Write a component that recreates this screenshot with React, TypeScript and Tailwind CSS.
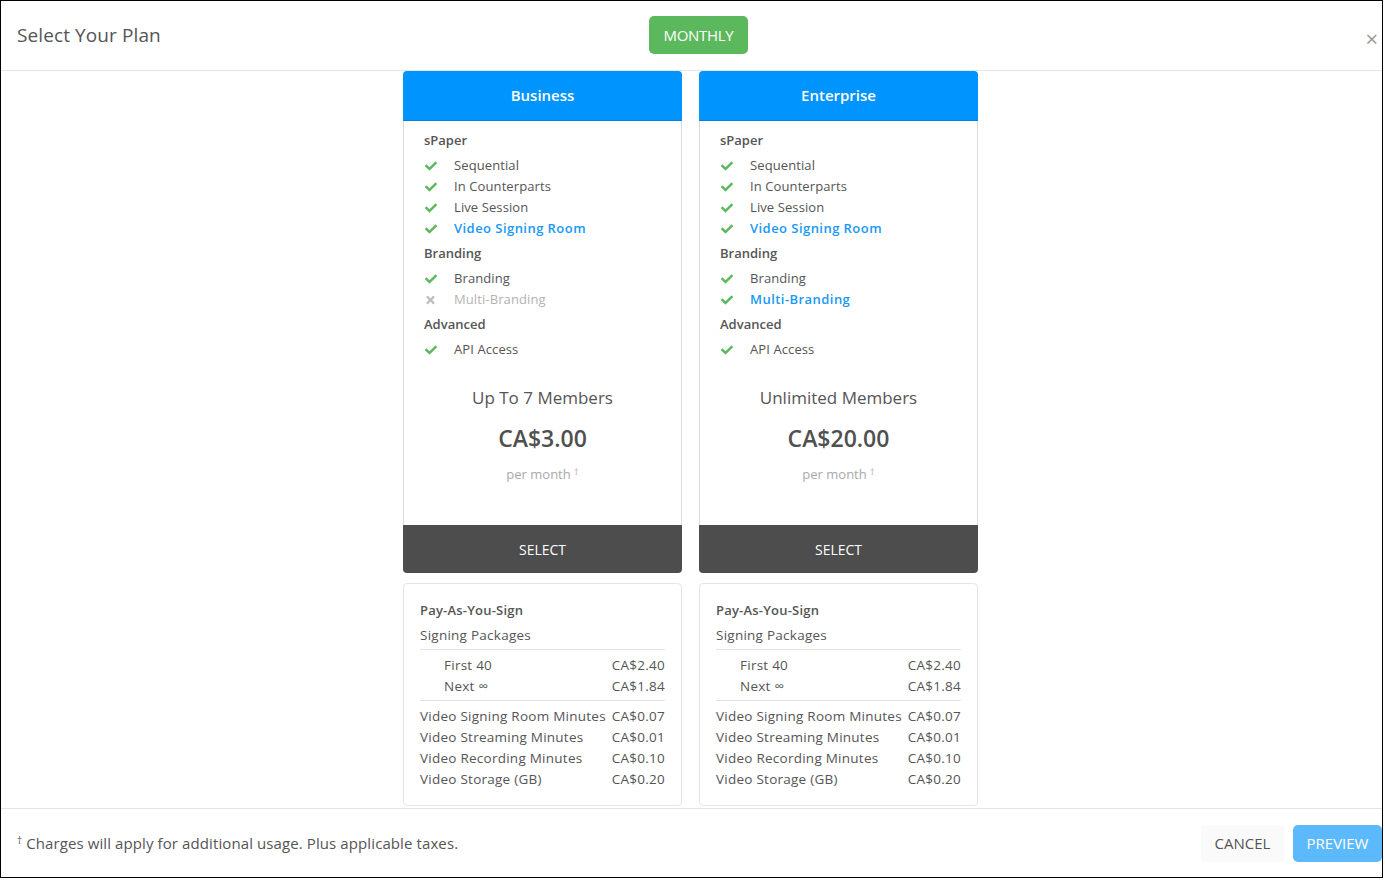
import { FaCheck, FaTimes } from "react-icons/fa";

type Feature = { label: string; on: boolean; highlight?: boolean };
type Group = { title: string; items: Feature[] };

interface Plan {
    name: string;
    groups: Group[];
    members: string;
    price: string;
}

const plans: Plan[] = [
    {
        name: "Business",
        members: "Up To 7 Members",
        price: "CA$3.00",
        groups: [
            {
                title: "sPaper",
                items: [
                    { label: "Sequential", on: true },
                    { label: "In Counterparts", on: true },
                    { label: "Live Session", on: true },
                    { label: "Video Signing Room", on: true, highlight: true },
                ],
            },
            {
                title: "Branding",
                items: [
                    { label: "Branding", on: true },
                    { label: "Multi-Branding", on: false },
                ],
            },
            { title: "Advanced", items: [{ label: "API Access", on: true }] },
        ],
    },
    {
        name: "Enterprise",
        members: "Unlimited Members",
        price: "CA$20.00",
        groups: [
            {
                title: "sPaper",
                items: [
                    { label: "Sequential", on: true },
                    { label: "In Counterparts", on: true },
                    { label: "Live Session", on: true },
                    { label: "Video Signing Room", on: true, highlight: true },
                ],
            },
            {
                title: "Branding",
                items: [
                    { label: "Branding", on: true },
                    { label: "Multi-Branding", on: true, highlight: true },
                ],
            },
            { title: "Advanced", items: [{ label: "API Access", on: true }] },
        ],
    },
];

const usage = [
    ["Video Signing Room Minutes", "CA$0.07"],
    ["Video Streaming Minutes", "CA$0.01"],
    ["Video Recording Minutes", "CA$0.10"],
    ["Video Storage (GB)", "CA$0.20"],
];

function PlanCard({ plan }: { plan: Plan }) {
    return (
        <div className="w-[279px] flex flex-col">
            {/* header */}
            <div className="h-[50px] bg-[#0094fe] rounded-t-[4px] border-b border-[#0583dc] flex items-center justify-center text-white text-[15px] font-semibold">
                {plan.name}
            </div>

            {/* features */}
            <div className="h-[404px] border-x border-[#dcdcdc] pt-[9px] px-[20px] text-[13px] text-[#555]">
                {plan.groups.map((g, gi) => (
                    <div key={g.title} className={gi > 0 ? "mt-[4px]" : ""}>
                        <div className="leading-[21px] font-semibold mb-[4px]">{g.title}</div>
                        {g.items.map((f) => (
                            <div key={f.label} className="flex items-center leading-[21px]">
                                <span className="w-[30px] flex items-center">
                                    {f.on ? (
                                        <FaCheck className="text-[#5cb85c] w-[14px] h-[12px]" />
                                    ) : (
                                        <FaTimes className="text-[#bdbdbd] w-[11px] h-[12px] ml-[1px]" />
                                    )}
                                </span>
                                <span
                                    className={
                                        f.highlight
                                            ? "text-[#1899f5] font-semibold tracking-[0.45px]"
                                            : f.on
                                            ? "tracking-[0.1px]"
                                            : "text-[#b3b3b3] tracking-[0.1px]"
                                    }
                                >
                                    {f.label}
                                </span>
                            </div>
                        ))}
                    </div>
                ))}
                <div className="text-center mt-[26px] text-[17px] leading-[24px] text-[#555]">{plan.members}</div>
                <div className="text-center mt-[12px] text-[23px] leading-[32px] font-semibold text-[#505050]">{plan.price}</div>
                <div className="text-center mt-[10px] text-[13px] leading-[20px] text-[#aaa]">
                    per month <sup className="text-[9px]">†</sup>
                </div>
            </div>

            <button className="h-[48px] bg-[#4d4d4d] rounded-b-[4px] text-white text-[14px]">SELECT</button>

            {/* pay as you sign */}
            <div className="mt-[10px] border border-[#e6e6e6] rounded-[4px] pt-[16px] pb-[15px] px-[16px] text-[13.5px] text-[#555] tracking-[0.25px]">
                <div className="leading-[21px] font-semibold mb-[4px] text-[13px] tracking-[0.2px]">Pay-As-You-Sign</div>
                <div className="leading-[21px] pb-[3px] border-b border-[#e3e3e3]">Signing Packages</div>
                <div className="pt-[5px] pb-[3px] border-b border-[#e3e3e3]">
                    <div className="flex justify-between leading-[21px] pl-[24px]">
                        <span>First 40</span>
                        <span>CA$2.40</span>
                    </div>
                    <div className="flex justify-between leading-[21px] pl-[24px]">
                        <span>Next ∞</span>
                        <span>CA$1.84</span>
                    </div>
                </div>
                <div className="pt-[5px]">
                    {usage.map(([k, v]) => (
                        <div key={k} className="flex justify-between leading-[21px] whitespace-nowrap">
                            <span>{k}</span>
                            <span>{v}</span>
                        </div>
                    ))}
                </div>
            </div>
        </div>
    );
}

export default function App() {
    return (
        <div className="w-[1385px] h-[880px] bg-white font-['Open_Sans',sans-serif]">
            <div className="w-[1383px] h-[878px] border border-black flex flex-col overflow-hidden">
                {/* header */}
                <div className="h-[70px] shrink-0 border-b border-[#e5e5e5] flex items-center pl-[16px] pr-[4px]">
                    <h2 className="text-[19px] text-[#555] w-[145px] whitespace-nowrap tracking-[0.1px]">Select Your Plan</h2>
                    <button className="ml-[487px] w-[99px] h-[38px] -mt-[1px] bg-[#5cb85c] rounded-[5px] text-white text-[15px] tracking-[-0.3px]">
                        MONTHLY
                    </button>
                    <span className="ml-auto mt-[4px] text-[22px] leading-none text-[#999]">×</span>
                </div>

                {/* plans */}
                <div className="flex-1 overflow-hidden flex justify-center gap-[17px] pr-[2px]">
                    {plans.map((p) => (
                        <PlanCard key={p.name} plan={p} />
                    ))}
                </div>

                {/* footer */}
                <div className="h-[69px] shrink-0 border-t border-[#e5e5e5] flex items-center pl-[16px]">
                    <span className="text-[15px] text-[#555] tracking-[0.1px]">
                        <sup className="text-[10px]">†</sup> Charges will apply for additional usage. Plus applicable taxes.
                    </span>
                    <button className="ml-auto w-[83px] h-[37px] bg-[#fafafa] rounded-[4px] text-[15px] text-[#555]">CANCEL</button>
                    <button className="ml-[9px] w-[89px] h-[37px] bg-[#5cbafc] rounded-[5px] text-[15px] text-white">PREVIEW</button>
                </div>
            </div>
        </div>
    );
}
